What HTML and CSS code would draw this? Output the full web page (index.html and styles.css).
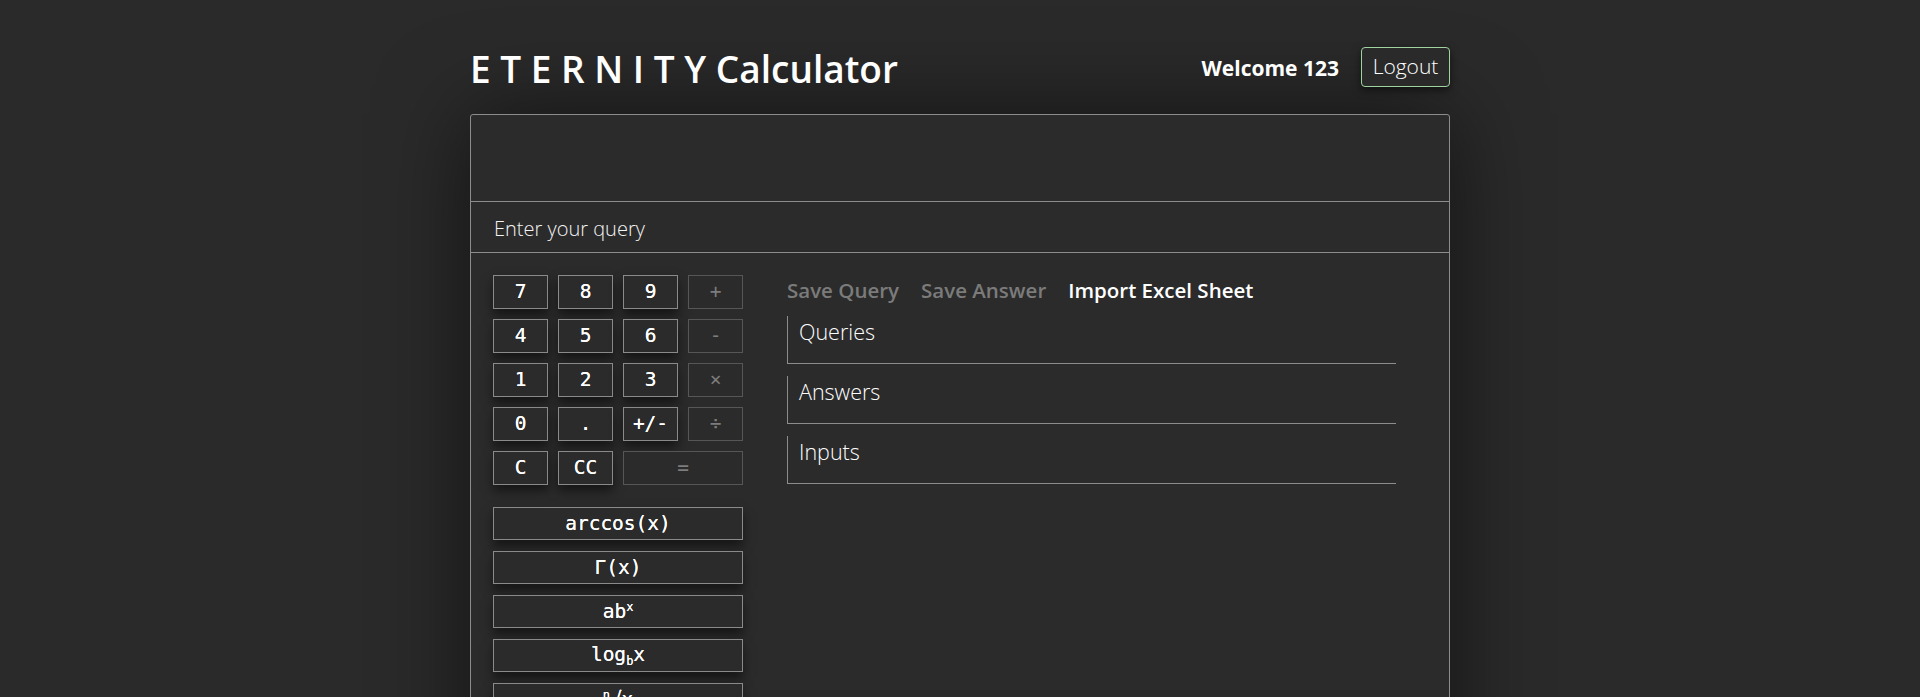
FILE: index.html
```html
<!DOCTYPE html>
<html lang="en">
<head>
<meta charset="utf-8">
<title>ETERNITY Calculator</title>
<link rel="stylesheet" href="styles.css">
</head>
<body>
<div class="page">
  <header class="header">
    <h1 class="title">E T E R N I T Y Calculator</h1>
    <div class="user">
      <span class="welcome">Welcome 123</span>
      <button class="logout">Logout</button>
    </div>
  </header>
  <main class="calc">
    <div class="display"></div>
    <div class="query-row">
      <input class="query" type="text" placeholder="Enter your query">
    </div>
    <div class="body">
      <div class="left">
        <div class="keypad">
          <button class="key">7</button>
          <button class="key">8</button>
          <button class="key">9</button>
          <button class="key op">+</button>
          <button class="key">4</button>
          <button class="key">5</button>
          <button class="key">6</button>
          <button class="key op">-</button>
          <button class="key">1</button>
          <button class="key">2</button>
          <button class="key">3</button>
          <button class="key op">×</button>
          <button class="key">0</button>
          <button class="key">.</button>
          <button class="key">+/-</button>
          <button class="key op">÷</button>
          <button class="key">C</button>
          <button class="key">CC</button>
          <button class="key op wide">=</button>
        </div>
        <div class="funcs">
          <button class="key fn">arccos(x)</button>
          <button class="key fn">Γ(x)</button>
          <button class="key fn">ab<sup>x</sup></button>
          <button class="key fn">log<sub>b</sub>x</button>
          <button class="key fn"><sup>n</sup>√x</button>
          <button class="key fn">sin(x)</button>
        </div>
      </div>
      <div class="right">
        <div class="actions">
          <span class="action dim">Save Query</span>
          <span class="action dim">Save Answer</span>
          <span class="action">Import Excel Sheet</span>
        </div>
        <div class="list">Queries</div>
        <div class="list">Answers</div>
        <div class="list">Inputs</div>
      </div>
    </div>
  </main>
</div>
</body>
</html>
```
FILE: styles.css
```css
* { box-sizing: border-box; }

html, body {
  margin: 0;
  background: #2a2a2a;
  color: #ffffff;
  font-family: "Open Sans", "Noto Sans", sans-serif;
  overflow: hidden;
}

.page {
  width: 980px;
  margin: 0 auto;
}

.header {
  display: flex;
  justify-content: space-between;
  align-items: center;
  height: 60px;
  margin-top: 37px;
}

.title {
  margin: 0;
  font-size: 37px;
  font-weight: 600;
  letter-spacing: 0;
  line-height: 1;
  padding-top: 3px;
}

.user {
  display: flex;
  align-items: center;
  gap: 22px;
}

.welcome {
  font-size: 21px;
  font-weight: 700;
  padding-top: 2px;
}

.logout {
  width: 89px;
  height: 40px;
  background: #2a2a2a;
  color: #ffffff;
  border: 1px solid #9fd39f;
  border-radius: 4px;
  font-family: "Open Sans", "Noto Sans", sans-serif;
  font-weight: 300;
  font-size: 21px;
  padding: 0 0 2px 0;
  box-shadow: 0 3px 8px rgba(0, 0, 0, 0.55);
}

.calc {
  margin-top: 17px;
  border: 1px solid #8c8c8c;
  border-radius: 3px 3px 0 0;
  background: #2b2b2b;
  box-shadow: 0 0 90px rgba(0, 0, 0, 0.55);
  min-height: 800px;
}

.display {
  height: 87px;
  border-bottom: 1px solid #8c8c8c;
}

.query-row {
  height: 51px;
  border-bottom: 1px solid #8c8c8c;
  display: flex;
  align-items: center;
}

.query {
  width: 100%;
  height: 100%;
  background: transparent;
  border: 0;
  outline: none;
  color: #fff;
  padding: 2px 0 0 23px;
  font-family: "Open Sans", "Noto Sans", sans-serif;
  font-weight: 300;
  font-size: 20px;
}
.query::placeholder { color: #f4f4f4; }

.body {
  display: flex;
  gap: 44px;
  padding: 22px 22px 0 22px;
}

.left {
  width: 250px;
  display: flex;
  flex-direction: column;
  gap: 22px;
}

.keypad {
  display: grid;
  grid-template-columns: repeat(4, 55px);
  grid-auto-rows: 34px;
  column-gap: 10px;
  row-gap: 10px;
}

.key {
  background: #2b2b2b;
  color: #ffffff;
  border: 1px solid #8a8a8a;
  border-radius: 0;
  padding: 0;
  font-family: "DejaVu Sans Mono", "Liberation Mono", monospace;
  font-size: 19.5px;
  font-weight: 400;
  text-shadow: 0 0 0.6px #ffffff;
  box-shadow: 0 6px 10px rgba(0, 0, 0, 0.5);
  line-height: 1;
}

.key.op {
  color: #7d7d7d;
  border-color: #565656;
  text-shadow: none;
  box-shadow: none;
}

.key.wide { grid-column: span 2; }

.funcs {
  display: flex;
  flex-direction: column;
  gap: 11px;
}

.key.fn {
  height: 33px;
  width: 100%;
}

.key sup, .key sub {
  font-size: 12px;
}
.key sup { vertical-align: 7px; }
.key sub { vertical-align: -4px; }

.right {
  width: 609px;
  display: flex;
  flex-direction: column;
  gap: 12px;
}

.actions {
  display: flex;
  gap: 22px;
  height: 48px;
  align-items: center;
  margin-bottom: -10px;
  margin-top: -9px;
}

.action {
  font-size: 20.5px;
  font-weight: 600;
  color: #ffffff;
}
.action.dim { color: #7b7b7b; }

.list {
  height: 48px;
  border-left: 1px solid #8c8c8c;
  border-bottom: 1px solid #8c8c8c;
  padding: 1px 0 0 11px;
  font-size: 21.5px;
  font-weight: 300;
  line-height: 30px;
}
```
